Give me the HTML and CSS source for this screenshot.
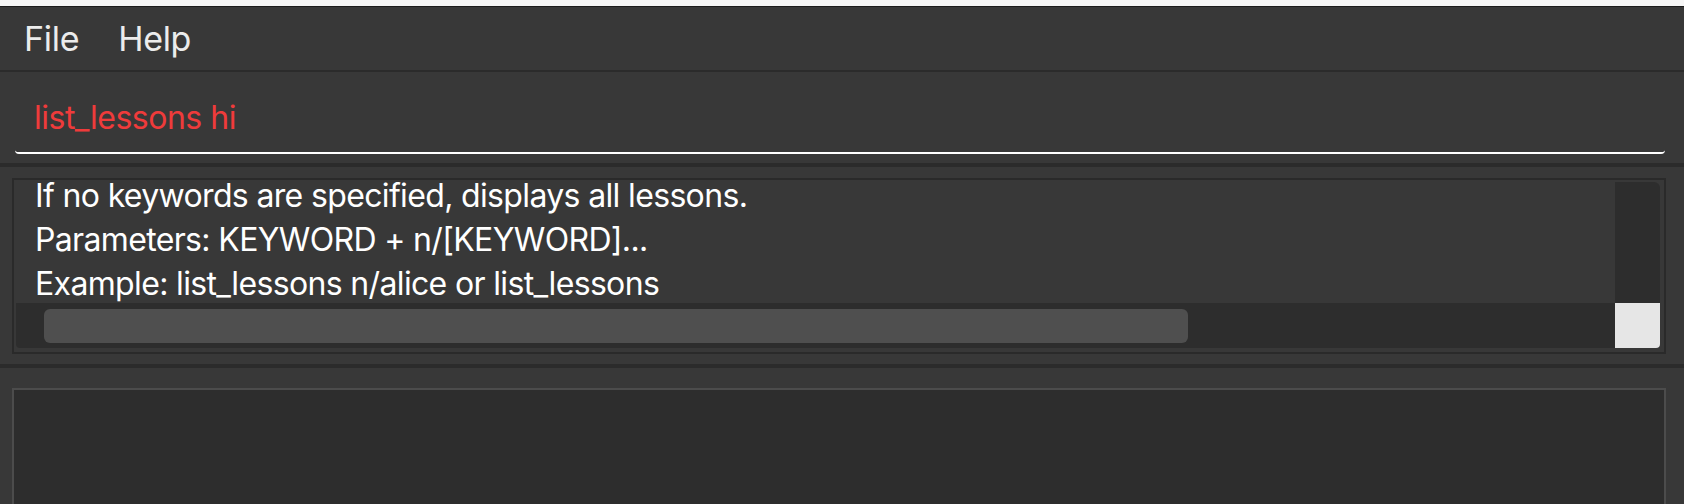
FILE: index.html
```html
<!DOCTYPE html>
<html lang="en">
<head>
<meta charset="utf-8">
<title>Lessons</title>
<link rel="stylesheet" href="styles.css">
</head>
<body>
<div class="app">
  <div class="title-strip"></div>
  <nav class="menubar">
    <span class="menu-item">File</span>
    <span class="menu-item">Help</span>
  </nav>
  <div class="sep sep-thin"></div>
  <section class="command">
    <div class="command-field">list_lessons hi</div>
  </section>
  <div class="sep"></div>
  <section class="result">
    <div class="result-panel">
      <div class="scroll">
        <div class="scroll-view">
          <div class="scroll-text">
            <div class="line">If no keywords are specified, displays all lessons.</div>
            <div class="line">Parameters: KEYWORD + n/[KEYWORD]...</div>
            <div class="line">Example: list_lessons n/alice or list_lessons</div>
          </div>
        </div>
        <div class="vbar"><div class="vthumb"></div></div>
        <div class="hbar"><div class="hthumb"></div></div>
      </div>
    </div>
  </section>
  <div class="sep"></div>
  <section class="list">
    <div class="list-box"></div>
  </section>
</div>
</body>
</html>
```

FILE: styles.css
```css
html, body {
  margin: 0;
  padding: 0;
}
body {
  width: 1684px;
  height: 504px;
  overflow: hidden;
  background: #383838;
  font-family: "Inter", "Noto Sans", sans-serif;
}
.app {
  display: flex;
  flex-direction: column;
}
.title-strip {
  height: 6px;
  background: #f6f6f6;
  border-bottom: 1px solid #1c1c1c;
}
.menubar {
  height: 63px;
  display: flex;
  align-items: stretch;
  gap: 39px;
  padding-left: 24px;
  background: #383838;
}
.menu-item {
  font-size: 34px;
  line-height: 63px;
  letter-spacing: -0.3px;
  color: #ececec;
}
.sep {
  height: 4px;
  background: #2b2b2b;
}
.sep-thin {
  height: 2px;
}
.command {
  height: 91px;
  box-sizing: border-box;
  padding: 12px 19px 0 15px;
  background: #383838;
}
.command-field {
  height: 68px;
  line-height: 68px;
  padding-left: 19px;
  font-size: 32px;
  letter-spacing: -0.5px;
  color: #ef3b3b;
  border-bottom: 2px solid #ffffff;
  border-radius: 0 0 4px 4px;
}
.result {
  height: 197px;
  box-sizing: border-box;
  padding: 11px 18px 0 12px;
  background: #383838;
}
.result-panel {
  height: 176px;
  box-sizing: border-box;
  border: 2px solid #2a2a2a;
  padding: 2px 4px 4px 2px;
  background: #383838;
}
.scroll {
  height: 166px;
  display: grid;
  grid-template-columns: 1fr 45px;
  grid-template-rows: 121px 45px;
}
.scroll-view {
  grid-column: 1;
  grid-row: 1;
  min-width: 0;
}
.scroll-text {
  margin-top: -8px;
  padding-left: 19px;
  font-size: 32px;
  line-height: 44px;
  letter-spacing: -0.65px;
  color: #ffffff;
  white-space: nowrap;
}
.vbar {
  grid-column: 2;
  grid-row: 1 / span 2;
  display: flex;
  flex-direction: column;
  justify-content: flex-end;
  background: #2d2d2d;
  border-radius: 0 6px 4px 0;
}
.vthumb {
  height: 45px;
  background: #e6e6e6;
  border-radius: 0 0 4px 0;
}
.hbar {
  grid-column: 1;
  grid-row: 2;
  background: #2d2d2d;
  border-radius: 0 0 0 4px;
  padding: 6px 0 5px 28px;
  box-sizing: border-box;
}
.hthumb {
  width: 1144px;
  height: 34px;
  background: #4f4f4f;
  border-radius: 6px;
}
.list {
  padding: 20px 18px 0 12px;
  background: #383838;
}
.list-box {
  height: 200px;
  background: #2d2d2d;
  border: 2px solid #4c4c4c;
}
```
